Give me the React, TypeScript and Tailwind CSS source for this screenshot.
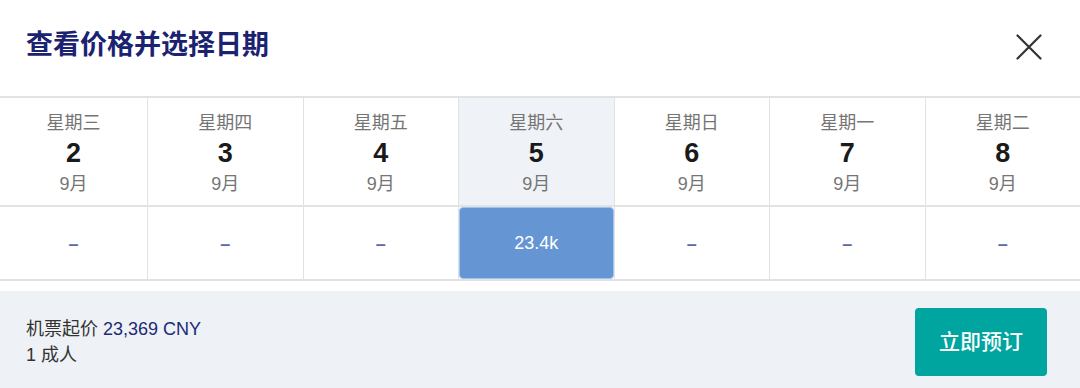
const DAYS = [
  { week: "星期三", day: "2", price: "" },
  { week: "星期四", day: "3", price: "" },
  { week: "星期五", day: "4", price: "" },
  { week: "星期六", day: "5", price: "23.4k" },
  { week: "星期日", day: "6", price: "" },
  { week: "星期一", day: "7", price: "" },
  { week: "星期二", day: "8", price: "" },
];

const FONT = "font-['Liberation_Sans','Noto_Sans_CJK_SC',sans-serif]";

export default function App() {
  const selected = 3;
  return (
    <div className={`w-[1080px] h-[388px] overflow-hidden bg-white ${FONT}`}>
      <div className="flex h-[96px] items-center justify-between pl-[26px] pr-[38px]">
        <h1 className="text-[27px] font-bold text-[#1b2370] pb-[6px]">查看价格并选择日期</h1>
        <svg width="26" height="26" viewBox="0 0 26 26" className="mb-[2px]">
          <path d="M1.5 1.5 L24.5 24.5 M24.5 1.5 L1.5 24.5" stroke="#333" strokeWidth="2.2" strokeLinecap="round" />
        </svg>
      </div>

      <div className="border-t-2 border-b-2 border-[#e2e2e2]">
        <div className="grid grid-cols-[147px_repeat(6,1fr)]">
          {DAYS.map((d, i) => (
            <div
              key={d.day}
              className={`flex h-[109px] flex-col items-center pt-[14px] border-b-2 border-[#e2e2e2] ${i > 0 ? "border-l" : ""} ${i === selected ? "bg-[#eff2f6]" : ""}`}
            >
              <span className="text-[18px] leading-[22px] text-[#757575]">{d.week}</span>
              <span className="mt-[3px] text-[27px] leading-[32px] font-bold text-[#1a1a1a]">{d.day}</span>
              <span className="mt-[4px] text-[18px] leading-[22px] text-[#757575]">9月</span>
            </div>
          ))}
          {DAYS.map((d, i) => (
            <div key={"p" + d.day} className={`h-[72px] border-[#e2e2e2] ${i > 0 ? "border-l" : ""}`}>
              {d.price ? (
                <div className="flex h-full items-center justify-center rounded-[4px] border border-[#9cc3f5] bg-[#6596d3] text-[18px] text-white">
                  {d.price}
                </div>
              ) : (
                <div className="flex h-full items-center justify-center pt-[2px] text-[18px] font-bold text-[#5b67a6]">–</div>
              )}
            </div>
          ))}
        </div>
      </div>

      <div className="mt-[10px] flex h-[97px] items-start justify-between bg-[#eef1f5] pl-[26px] pr-[33px]">
        <div className="pt-[25px] text-[18px] leading-[26px] text-[#333]">
          <div>
            机票起价 <span className="text-[#1b2a78]">23,369 CNY</span>
          </div>
          <div>1 成人</div>
        </div>
        <button className="mt-[17px] flex h-[68px] w-[132px] items-center justify-center rounded-[4px] bg-[#00a5a0] text-[21px] font-medium text-white">
          立即预订
        </button>
      </div>
    </div>
  );
}
